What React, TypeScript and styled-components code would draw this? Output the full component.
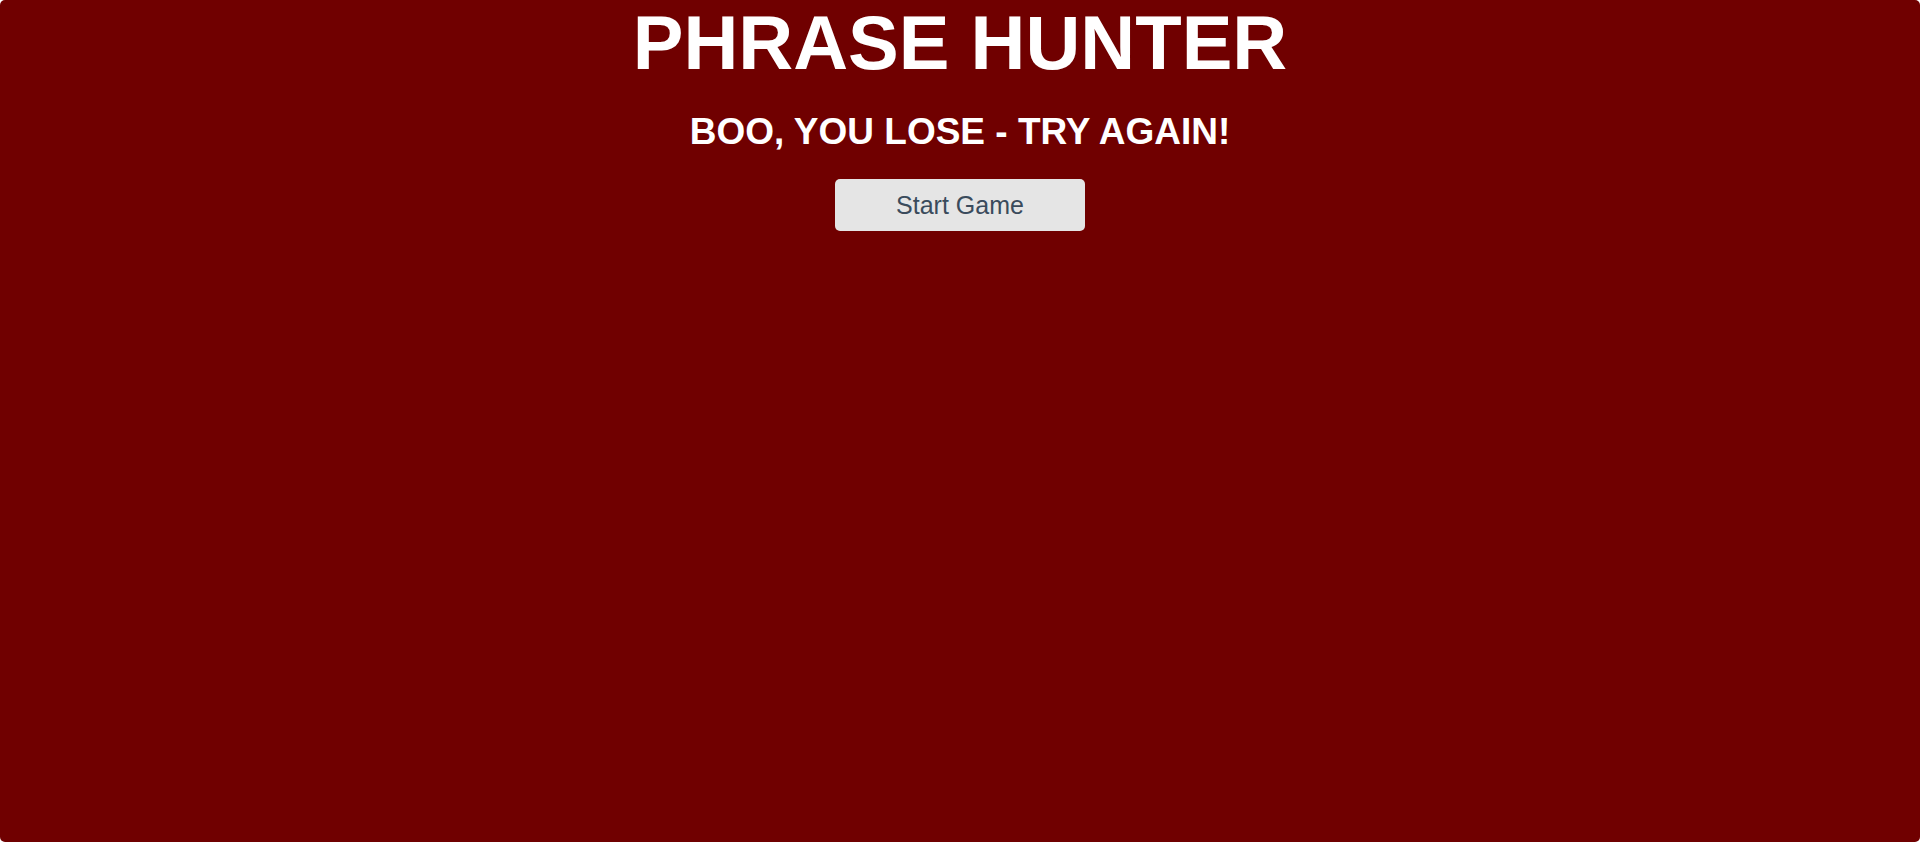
import React from "react";
import styled, { createGlobalStyle } from "styled-components";

const GlobalStyle = createGlobalStyle`
  html, body {
    margin: 0;
    padding: 0;
    background: #ffffff;
  }
  body {
    font-family: "Liberation Sans", Arial, Helvetica, sans-serif;
  }
`;

const Overlay = styled.div`
  box-sizing: border-box;
  min-height: 842px;
  display: flex;
  flex-direction: column;
  align-items: center;
  background: #700000;
  border-radius: 5px;
  padding-top: 5px;
`;

const Title = styled.h2`
  margin: 0;
  font-size: 76px;
  line-height: 1;
  font-weight: 700;
  color: #ffffff;
  text-transform: uppercase;
`;

const Message = styled.h1`
  margin: 32px 0 0;
  font-size: 37px;
  line-height: 1;
  font-weight: 700;
  color: #ffffff;
  text-transform: uppercase;
`;

const StartButton = styled.button`
  margin-top: 29px;
  width: 250px;
  height: 52px;
  border: none;
  border-radius: 5px;
  background: #e5e5e5;
  color: #3a4b5c;
  font-family: "Liberation Sans", Arial, Helvetica, sans-serif;
  font-size: 25px;
  cursor: pointer;
`;

export default function App() {
  return (
    <>
      <GlobalStyle />
      <Overlay>
        <Title>Phrase Hunter</Title>
        <Message>Boo, you lose - try again!</Message>
        <StartButton>Start Game</StartButton>
      </Overlay>
    </>
  );
}
